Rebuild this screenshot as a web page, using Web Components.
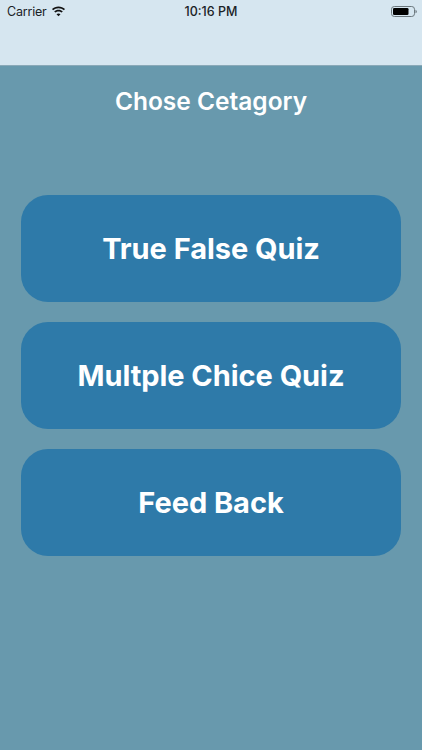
<!DOCTYPE html>
<html><head><meta charset="utf-8">
<style>html,body{margin:0;padding:0;height:100%;overflow:hidden}body{font-family:Inter,"Liberation Sans",sans-serif}</style>
</head><body>
<quiz-app>
  <nav-header></nav-header>
  <quiz-title>Chose Cetagory</quiz-title>
  <quiz-menu>
    <quiz-button>True False Quiz</quiz-button>
    <quiz-button>Multple Chice Quiz</quiz-button>
    <quiz-button>Feed Back</quiz-button>
  </quiz-menu>
</quiz-app>
<script>
function def(name, html){
  customElements.define(name, class extends HTMLElement{
    constructor(){super();this.attachShadow({mode:'open'}).innerHTML=html;}
  });
}
def('quiz-app',`<style>:host{display:flex;flex-direction:column;width:422px;height:750px;background:#6899ad;overflow:hidden}</style><slot></slot>`);
def('nav-header',`<style>
:host{display:block;box-sizing:border-box;height:66px;background:#d6e6f0;border-bottom:1px solid #8aa9b8;color:#1a2226}
.bar{display:flex;align-items:center;justify-content:space-between;height:20px;padding:1px 5px 0 7px;position:relative;font:400 12.5px Inter,"Liberation Sans",sans-serif}
.l{display:flex;align-items:center;gap:5px}
.c{letter-spacing:-.2px}
.t{position:absolute;left:0;right:0;text-align:center;font-weight:500}
svg{display:block}
</style><div class="bar"><div class="l"><span class="c">Carrier</span>
<svg width="15" height="11" viewBox="0 0 15 11" style="margin-left:-1px"><path fill="#111" d="M7.5 2.2c2.100 0 4 .8 5.400 2.100l1.100-1.200C12.300 1.500 10 .5 7.500.5S2.700 1.500 1 3.100l1.100 1.200C3.500 3 5.400 2.200 7.500 2.200zM7.500 5.400c1.200 0 2.300.5 3.100 1.200l1.200-1.200C10.700 4.300 9.200 3.700 7.500 3.700S4.300 4.300 3.200 5.400l1.200 1.200c.8-.7 1.900-1.200 3.100-1.200zM7.500 10.300l2-2.100c-.5-.5-1.200-.8-2-.8s-1.500.3-2 .8z"/></svg></div>
<span class="t">10:16 PM</span>
<svg width="26" height="11" viewBox="0 0 26 11"><rect x=".5" y=".5" width="23" height="10" rx="2.800" fill="none" stroke="#6b777d"/><rect x="2" y="2" width="15.500" height="7" rx="1.300" fill="#000"/><path d="M24.500 3.700v3.600c.7-.2 1.300-.9 1.300-1.800s-.6-1.600-1.300-1.800z" fill="#6b777d"/></svg></div>`);
def('quiz-title',`<style>:host{display:block;margin-top:20px;text-align:center;color:#fff;font:600 24.500px/30px Inter,"Liberation Sans",sans-serif}</style><slot></slot>`);
def('quiz-menu',`<style>:host{display:flex;flex-direction:column;gap:20px;padding:79px 21px 0}</style><slot></slot>`);
def('quiz-button',`<style>:host{display:flex;align-items:center;justify-content:center;height:107px;border-radius:27px;background:#2e7aa9;color:#fff;font:650 29px Inter,"Liberation Sans",sans-serif;letter-spacing:-.05px}</style><slot></slot>`);
</script>
</body></html>
